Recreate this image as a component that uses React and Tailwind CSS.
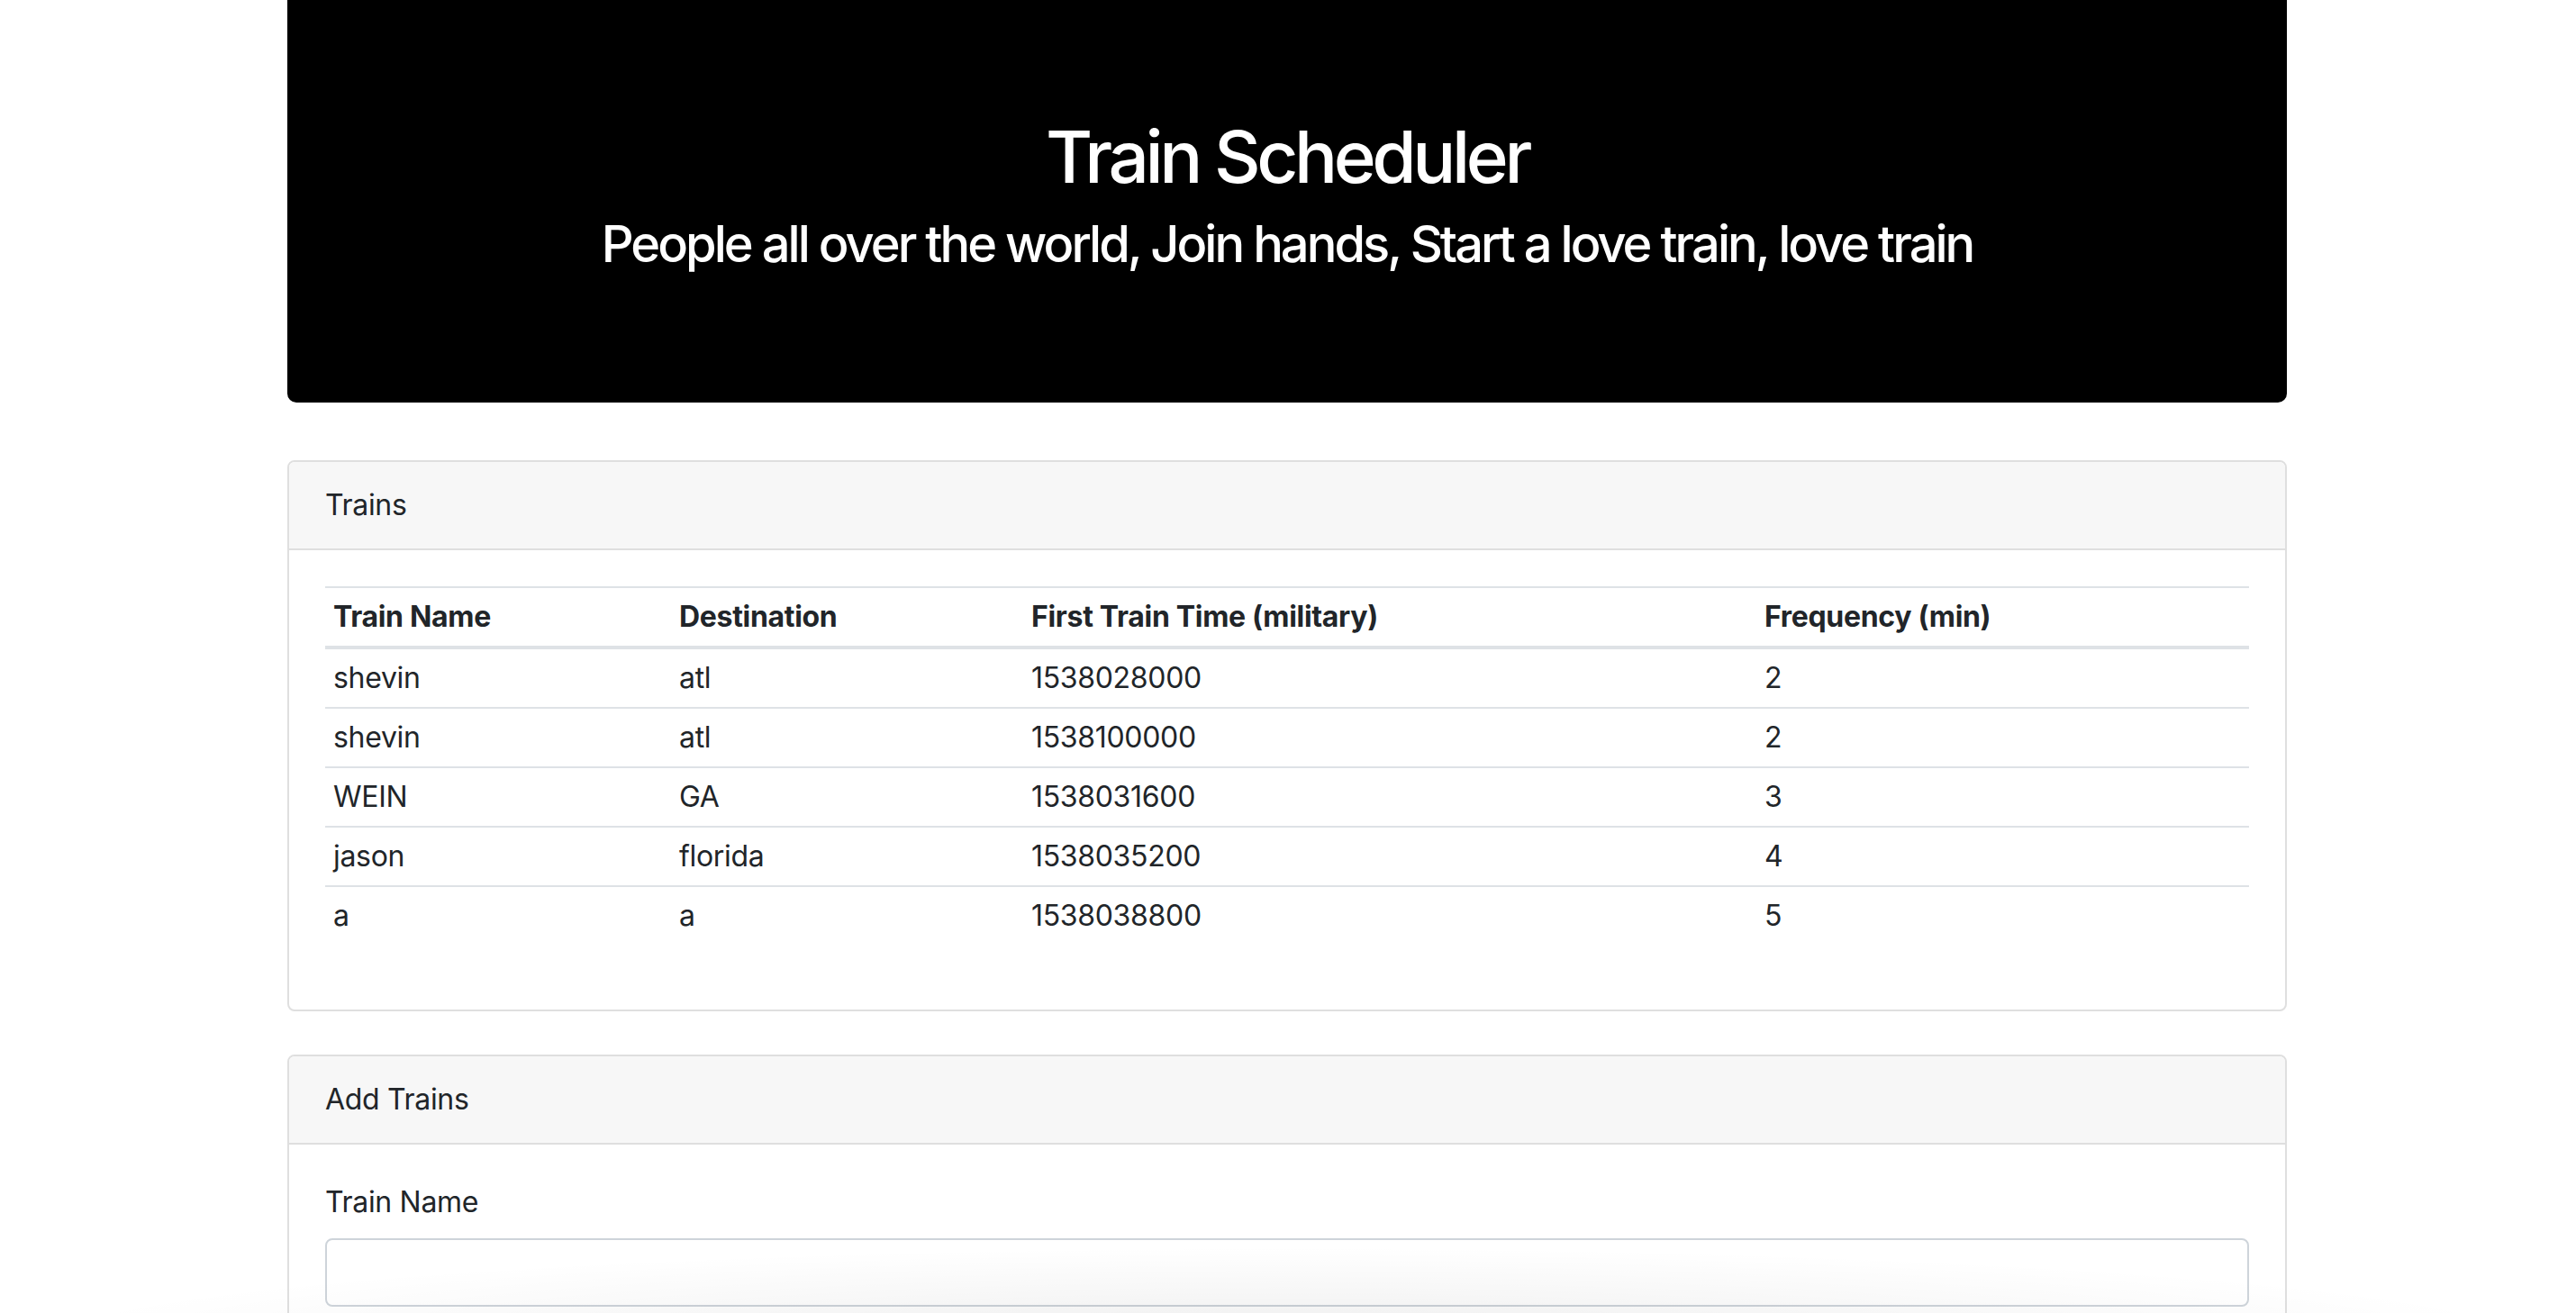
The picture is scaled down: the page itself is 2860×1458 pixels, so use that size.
import React from 'react'

const trains = [
  { name: 'shevin', dest: 'atl', first: '1538028000', freq: '2' },
  { name: 'shevin', dest: 'atl', first: '1538100000', freq: '2' },
  { name: 'WEIN', dest: 'GA', first: '1538031600', freq: '3' },
  { name: 'jason', dest: 'florida', first: '1538035200', freq: '4' },
  { name: 'a', dest: 'a', first: '1538038800', freq: '5' },
]

function Card({ title, children, className = '' }) {
  return (
    <div className={`border-2 border-[#dfdfdf] rounded-[8px] bg-white ${className}`}>
      <div className="bg-[#f7f7f7] border-b-2 border-[#dfdfdf] rounded-t-[6px] px-[40px] py-[24px] text-[32px] leading-[48px] tracking-[-0.01em]">
        {title}
      </div>
      <div className="p-[40px]">{children}</div>
    </div>
  )
}

export default function App() {
  return (
    <div className="relative min-h-[1458px] bg-white text-[#212529] font-['Inter',sans-serif] overflow-hidden">
      <div className="w-[2220px] mx-auto -translate-x-[1px]">
        {/* Jumbotron */}
        <div className="bg-black text-white text-center rounded-b-[10px] pt-[126px] pb-[126px] mb-[64px]">
          <h1 className="text-[80px] leading-[96px] font-medium tracking-[-0.055em] mb-[16px]">Train Scheduler</h1>
          <h3 className="text-[56px] leading-[67px] font-medium tracking-[-0.053em] mb-[16px]">
            People all over the world, Join hands, Start a love train, love train
          </h3>
        </div>

        {/* Trains list */}
        <Card title="Trains" className="mb-[48px]">
          <table className="w-full border-collapse text-[32px] leading-[48px] tracking-[-0.01em] mb-[32px]">
            <thead>
              <tr className="border-t-2 border-[#dee2e6]">
                <th className="w-[384px] text-left font-bold px-[9px] py-[8px] border-b-4 border-[#dee2e6]">Train Name</th>
                <th className="w-[391px] text-left font-bold px-[9px] py-[8px] border-b-4 border-[#dee2e6]">Destination</th>
                <th className="w-[814px] text-left font-bold px-[9px] py-[8px] border-b-4 border-[#dee2e6]">First Train Time (military)</th>
                <th className="text-left font-bold px-[9px] py-[8px] border-b-4 border-[#dee2e6]">Frequency (min)</th>
              </tr>
            </thead>
            <tbody>
              {trains.map((t, i) => (
                <tr key={i} className={i > 0 ? 'border-t-2 border-[#dee2e6]' : ''}>
                  <td className="px-[9px] py-[8px]">{t.name}</td>
                  <td className="px-[9px] py-[8px]">{t.dest}</td>
                  <td className="px-[9px] py-[8px]">{t.first}</td>
                  <td className="px-[9px] py-[8px]">{t.freq}</td>
                </tr>
              ))}
            </tbody>
          </table>
        </Card>

        {/* Add trains form */}
        <Card title="Add Trains">
          <label className="block text-[32px] leading-[48px] tracking-[-0.01em] mb-[16px]">Train Name</label>
          <input
            type="text"
            className="block w-full h-[76px] border-2 border-[#ced4da] rounded-[8px] px-[24px] text-[32px] bg-white outline-none"
          />
        </Card>
      </div>

      {/* bottom window shadow */}
      <div className="pointer-events-none absolute left-0 right-0 bottom-0 h-[110px] bg-[radial-gradient(ellipse_at_bottom,rgba(0,0,0,0.07),rgba(0,0,0,0)_70%)]" />
    </div>
  )
}
